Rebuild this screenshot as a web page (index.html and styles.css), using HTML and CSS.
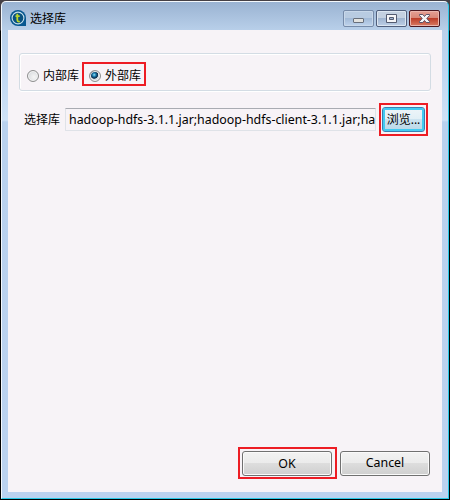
FILE: index.html
```html
<!DOCTYPE html>
<html lang="zh-CN">
<head>
<meta charset="utf-8">
<title>选择库</title>
<link rel="stylesheet" href="styles.css">
</head>
<body>
<div class="window">
  <header class="titlebar">
    <svg class="app-icon" width="16" height="16" viewBox="0 0 16 16">
      <path d="M8 0a8 8 0 0 1 8 8v8H8A8 8 0 0 1 8 0Z" fill="#075891"/>
      <circle cx="8" cy="8" r="5.9" fill="#08517f" stroke="#c6e0ec" stroke-width="1.1"/>
      <path d="M7.3 3.800v6.300q0 1.500 1.500 1.500h1M5.500 6.200h4.200" fill="none" stroke="#b9d52c" stroke-width="1.8"/>
    </svg>
    <h1 class="title">选择库</h1>
    <div class="controls">
      <button class="control" aria-label="最小化"><svg width="29" height="15"><rect x="9.5" y="7.5" width="10" height="4" rx=".5" fill="#e2e2df" stroke="#686f7b"/></svg></button>
      <button class="control control-max" aria-label="最大化"><svg width="29" height="15"><path d="M9.5 3.5h10v8h-10ZM12.500 6.500v2h4v-2Z" fill="#f5f5f7" fill-rule="evenodd" stroke="#535b70"/></svg></button>
      <button class="control control-close" aria-label="关闭"><svg width="29" height="15"><path d="M9.500 3.500h3.300l1.700 2 1.700-2h3.300v1l-2.700 3 2.700 3v1h-3.300l-1.700-2-1.700 2H9.500v-1l2.700-3-2.700-3Z" fill="#f4f4f6" stroke="#5a5368"/></svg></button>
    </div>
  </header>
  <main class="content">
    <div class="group">
      <label class="option"><span class="radio"></span>内部库</label>
      <label class="option highlight option-selected"><span class="radio radio-on"></span>外部库</label>
    </div>
    <div class="row">
      <span class="label">选择库</span>
      <div class="field"><span class="value">hadoop-hdfs-3.1.1.jar;hadoop-hdfs-client-3.1.1.jar;ha</span></div>
      <div class="highlight browse-wrap"><button class="button browse">浏览...</button></div>
    </div>
    <footer class="footer">
      <div class="highlight ok-wrap"><button class="button">OK</button></div>
      <button class="button">Cancel</button>
    </footer>
  </main>
</div>
</body>
</html>
```

FILE: styles.css
```css
* { box-sizing: border-box; }
body {
  margin: 0;
  height: 500px;
  padding: 1px;
  overflow: hidden;
  background: linear-gradient(#454045 0, #454045 30px, #000 31px);
  font: 12px/16px "Noto Sans", "Noto Sans CJK SC", sans-serif;
  color: #000;
}
.window {
  display: flex;
  flex-direction: column;
  height: 498px;
  padding: 0 6px 6px;
  border: 1px solid #29c8e6;
  border-top-color: #f4f8fc;
  border-left-color: #f4f8fd;
  border-radius: 5px 5px 0 0;
  background: linear-gradient(#9ab3d2, #b9d0ea 29px, #bfd7f2 70px, #cfe2f6 118px, #b9d1ee 120px, #bbd2ef);
}
.titlebar {
  flex: 0 0 28px;
  display: flex;
  align-items: flex-start;
  padding: 7px 2px 0;
}
.app-icon { margin: 1px 0 0 0; }
.title { margin: 2px 0 0 4px; font: inherit; }
.controls { display: flex; gap: 2px; margin: 1px 0 0 auto; }
.control {
  width: 31px;
  height: 17px;
  padding: 0;
  border: 1px solid #768ba9;
  border-radius: 2px;
  background: linear-gradient(#b8cbe1 0 48%, #a2bad7 50%, #bfd4ed);
  box-shadow: inset 0 0 0 1px #c8d8ea;
}
.control svg { display: block; }
.control-max {
  border-color: #505f7c;
  background: linear-gradient(#c4d1e1 0 48%, #a0b5d0 50%, #bdcfe6);
  box-shadow: inset 0 0 0 1px #dce6f1;
}
.control-close {
  border-color: #4b1820;
  background: linear-gradient(#e5a095, #d98777 46%, #bd3e29 50%, #d87b63);
  box-shadow: inset 0 0 0 1px #eab5ac;
}
.content {
  flex: 1;
  display: flex;
  flex-direction: column;
  padding: 23px 11px 13px;
  background: #f7f3f7;
}
.group {
  display: flex;
  align-items: flex-start;
  width: 412px;
  height: 38px;
  padding: 8px 7px 0;
  border: 1px solid #d3dce4;
  border-radius: 3px;
  box-shadow: inset 1px 1px #fff, 0 1px #fff;
}
.option { display: flex; align-items: center; height: 24px; padding-top: 4px; }
.highlight { border: 2px solid #ed1c24; }
.option-selected { width: 64px; margin-left: 3px; padding-left: 5px; }
.radio {
  width: 12px;
  height: 12px;
  margin-right: 4px;
  border: 1px solid #8e8f8f;
  border-radius: 50%;
  background: radial-gradient(circle at 60% 60%, #f5f5f5, #cfd3d7);
  box-shadow: inset 0 0 0 1px #f4f4f4;
}
.radio-on { background: radial-gradient(circle at 42% 38%, #9fe0f5 0, #238bba 1.500px, #0b3c62 3px, #17364f 3.600px, #d5dce0 4.200px); }
.row {
  display: flex;
  align-items: center;
  height: 33px;
  margin-top: 12px;
  padding-left: 5px;
}
.label { width: 41px; padding-top: 1px; }
.field {
  width: 311px;
  height: 23px;
  padding: 3px 0 0 3px;
  border: 1px solid #dfe2e8;
  border-top-color: #a9abb2;
  border-radius: 1px;
}
.value {
  display: block;
  white-space: nowrap;
  font-size: 12.4px;
}
.browse-wrap { width: 49px; height: 33px; margin-left: 3px; padding: 2px 1px; }
.button {
  width: 90px;
  height: 25px;
  padding: 0;
  border: 1px solid #707070;
  border-radius: 3px;
  background: linear-gradient(#f2f2f2, #ebebeb 48%, #dddddd 50%, #cfcfcf);
  box-shadow: inset 0 0 0 1px #fafafa;
  font: inherit;
  font-size: 12.4px;
  color: #000;
}
.browse {
  display: block;
  width: 43px;
  border-color: #3c7fb1;
  background: linear-gradient(#eef5f9, #e2eff6 48%, #cce3f0 50%, #b9d7e7);
  box-shadow: inset 0 0 0 2px #42cbf2;
  font-size: 12px;
}
.footer {
  display: flex;
  align-items: center;
  gap: 3px;
  margin: auto 0 0 219px;
}
.ok-wrap { width: 99px; height: 32px; padding: 2px; }
.ok-wrap .button { display: block; }
```
